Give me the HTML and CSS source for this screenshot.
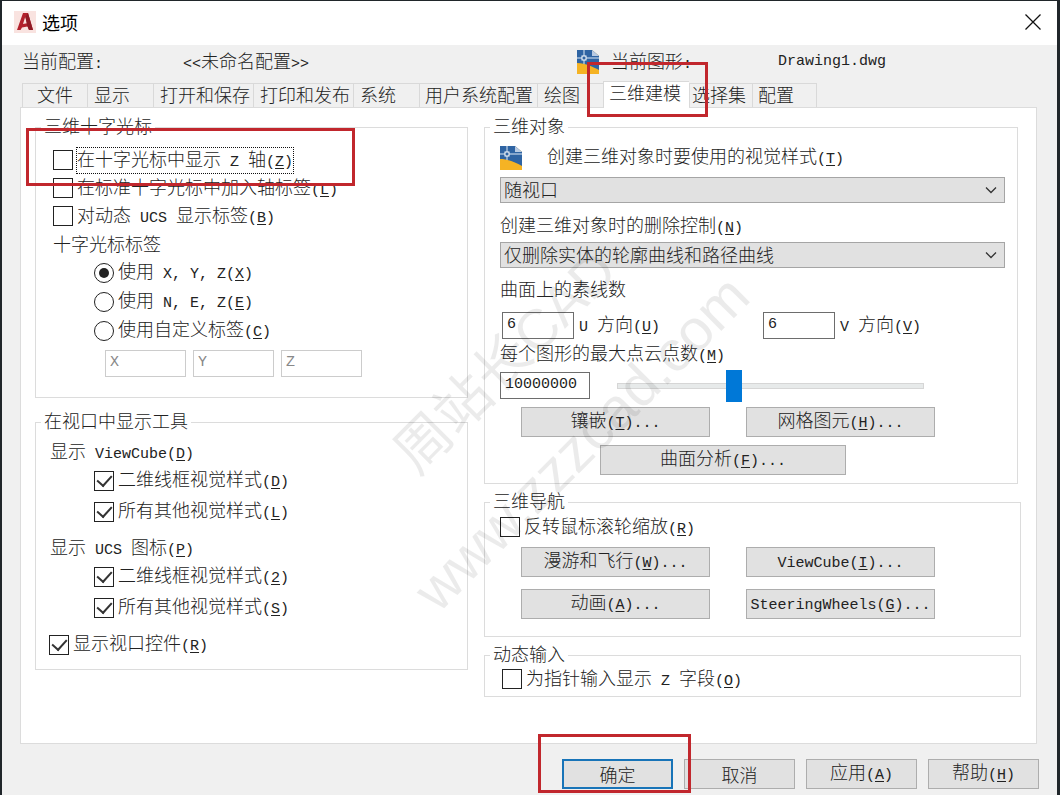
FILE: index.html
```html
<!DOCTYPE html>
<html lang="zh-CN">
<head>
<meta charset="utf-8">
<meta name="viewport" content="width=device-width, initial-scale=1">
<title>选项</title>
<link rel="stylesheet" href="styles.css">
</head>
<body>
<svg width="0" height="0" class="sprite" aria-hidden="true">
  <symbol id="dwg" viewBox="0 0 22 24">
    <path d="M0 0H15L22 6V24H0Z" fill="#f5b324"/>
    <path d="M0 0H15L22 6V20C16 17 9 13 0 13Z" fill="#2f64a3"/>
    <path d="M15 0L22 6H15Z" fill="#b9cbe3"/>
    <path d="M7 0V6M7 10V14M0 8H5M9 8H22" stroke="#dfeaf6" stroke-width="1" fill="none"/>
    <rect x="5" y="6" width="4" height="4" fill="#2f64a3" stroke="#fff" stroke-width="1"/>
  </symbol>
  <symbol id="chevron" viewBox="0 0 12 8">
    <path d="M1 1.500L6 6.500L11 1.500" fill="none" stroke="#333" stroke-width="1.300"/>
  </symbol>
</svg>
<div class="stage">
  <main class="dialog">
    <header class="titlebar">
      <svg class="app-icon" viewBox="0 0 22 22" aria-hidden="true">
        <rect width="22" height="22" fill="#f9e3e0"/>
        <path d="M3 19L9 2H14L19 19H15L13.500 15.500L8 16.500L6.500 19Z" fill="#b3212c"/>
        <path d="M11.200 6L9 13L13 12.200Z" fill="#f9e3e0"/>
        <path d="M14 2L19 19H15L13 14L11.500 6Z" fill="#8f1a25"/>
      </svg>
      <h1 class="title">选项</h1>
      <button class="close" type="button" aria-label="关闭">
        <svg viewBox="0 0 16 16" aria-hidden="true"><path d="M.5.5L15.500 15.500M15.500.5L.5 15.500" stroke="#111" stroke-width="1.300"/></svg>
      </button>
    </header>
    <div class="profile">
      <span>当前配置<span class="m">:</span></span>
      <span><span class="m">&lt;&lt;</span>未命名配置<span class="m">&gt;&gt;</span></span>
      <svg class="dwg" aria-hidden="true"><use href="#dwg"/></svg>
      <span>当前图形<span class="m">:</span></span>
      <span class="m">Drawing1.dwg</span>
    </div>
    <div class="tabs" role="tablist">
      <button class="tab tab-first" role="tab" type="button">文件</button>
      <button class="tab" role="tab" type="button">显示</button>
      <button class="tab tab-mid" role="tab" type="button">打开和保存</button>
      <button class="tab tab-mid" role="tab" type="button">打印和发布</button>
      <button class="tab" role="tab" type="button">系统</button>
      <button class="tab tab-wide" role="tab" type="button">用户系统配置</button>
      <button class="tab" role="tab" type="button">绘图</button>
      <button class="tab tab-active" role="tab" type="button" aria-selected="true">三维建模</button>
      <button class="tab tab-tight" role="tab" type="button">选择集</button>
      <button class="tab tab-last" role="tab" type="button">配置</button>
    </div>
    <div class="panel" role="tabpanel">
      <div class="column">
        <fieldset class="group crosshair">
          <legend>三维十字光标</legend>
          <label class="option"><input type="checkbox"><span class="focused">在十字光标中显示<span class="m"> Z </span>轴<span class="m">(<u>Z</u>)</span></span></label>
          <label class="option"><input type="checkbox"><span>在标准十字光标中加入轴标签<span class="m">(<u>L</u>)</span></span></label>
          <label class="option"><input type="checkbox"><span>对动态<span class="m"> UCS </span>显示标签<span class="m">(<u>B</u>)</span></span></label>
          <p class="caption">十字光标标签</p>
          <div class="radios">
            <label class="option"><input type="radio" name="axis" checked><span>使用<span class="m"> X, Y, Z(<u>X</u>)</span></span></label>
            <label class="option"><input type="radio" name="axis"><span>使用<span class="m"> N, E, Z(<u>E</u>)</span></span></label>
            <label class="option"><input type="radio" name="axis"><span>使用自定义标签<span class="m">(<u>C</u>)</span></span></label>
            <div class="axis-names">
              <input class="field" type="text" value="X" aria-label="X 轴标签" disabled>
              <input class="field" type="text" value="Y" aria-label="Y 轴标签" disabled>
              <input class="field" type="text" value="Z" aria-label="Z 轴标签" disabled>
            </div>
          </div>
        </fieldset>
        <fieldset class="group tools">
          <legend>在视口中显示工具</legend>
          <p class="caption">显示<span class="m"> ViewCube(<u>D</u>)</span></p>
          <div class="checks">
            <label class="option"><input type="checkbox" checked><span>二维线框视觉样式<span class="m">(<u>D</u>)</span></span></label>
            <label class="option"><input type="checkbox" checked><span>所有其他视觉样式<span class="m">(<u>L</u>)</span></span></label>
          </div>
          <p class="caption">显示<span class="m"> UCS </span>图标<span class="m">(<u>P</u>)</span></p>
          <div class="checks">
            <label class="option"><input type="checkbox" checked><span>二维线框视觉样式<span class="m">(<u>2</u>)</span></span></label>
            <label class="option"><input type="checkbox" checked><span>所有其他视觉样式<span class="m">(<u>S</u>)</span></span></label>
          </div>
          <label class="option"><input type="checkbox" checked><span>显示视口控件<span class="m">(<u>R</u>)</span></span></label>
        </fieldset>
      </div>
      <div class="column column-right">
        <fieldset class="group objects">
          <legend>三维对象</legend>
          <div class="style-head">
            <svg class="dwg" aria-hidden="true"><use href="#dwg"/></svg>
            <label for="visual">创建三维对象时要使用的视觉样式<span class="m">(<u>T</u>)</span></label>
          </div>
          <div class="combo"><select id="visual"><option>随视口</option></select><svg aria-hidden="true"><use href="#chevron"/></svg></div>
          <label class="line" for="deletion">创建三维对象时的删除控制<span class="m">(<u>N</u>)</span></label>
          <div class="combo"><select id="deletion"><option>仅删除实体的轮廓曲线和路径曲线</option></select><svg aria-hidden="true"><use href="#chevron"/></svg></div>
          <p class="line line-tall">曲面上的素线数</p>
          <div class="isolines">
            <div class="iso"><input class="field" id="iso-u" type="text" value="6"><label for="iso-u"><span class="m">U </span>方向<span class="m">(<u>U</u>)</span></label></div>
            <div class="iso"><input class="field" id="iso-v" type="text" value="6"><label for="iso-v"><span class="m">V </span>方向<span class="m">(<u>V</u>)</span></label></div>
          </div>
          <label class="line line-short" for="points">每个图形的最大点云点数<span class="m">(<u>M</u>)</span></label>
          <div class="points">
            <input class="field" id="points" type="text" value="10000000">
            <input class="slider" type="range" min="0" max="1000" value="375" aria-label="最大点云点数">
          </div>
          <div class="buttons">
            <button class="btn" type="button">镶嵌<span class="m">(<u>T</u>)...</span></button>
            <button class="btn" type="button">网格图元<span class="m">(<u>H</u>)...</span></button>
            <button class="btn btn-wide" type="button">曲面分析<span class="m">(<u>F</u>)...</span></button>
          </div>
        </fieldset>
        <fieldset class="group navigation">
          <legend>三维导航</legend>
          <label class="option"><input type="checkbox"><span>反转鼠标滚轮缩放<span class="m">(<u>R</u>)</span></span></label>
          <div class="buttons buttons-loose">
            <button class="btn" type="button">漫游和飞行<span class="m">(<u>W</u>)...</span></button>
            <button class="btn" type="button"><span class="m">ViewCube(<u>I</u>)...</span></button>
            <button class="btn" type="button">动画<span class="m">(<u>A</u>)...</span></button>
            <button class="btn" type="button"><span class="m">SteeringWheels(<u>G</u>)...</span></button>
          </div>
        </fieldset>
        <fieldset class="group dynamic">
          <legend>动态输入</legend>
          <label class="option"><input type="checkbox"><span>为指针输入显示<span class="m"> Z </span>字段<span class="m">(<u>O</u>)</span></span></label>
        </fieldset>
      </div>
    </div>
    <footer class="actions">
      <button class="btn btn-default" type="button">确定</button>
      <button class="btn" type="button">取消</button>
      <button class="btn" type="button">应用<span class="m">(<u>A</u>)</span></button>
      <button class="btn" type="button">帮助<span class="m">(<u>H</u>)</span></button>
    </footer>
  </main>
  <div class="watermark watermark-name">周站长CAD</div>
  <div class="watermark watermark-site">www.zzzcad.com</div>
  <div class="mark mark-option"></div>
  <div class="mark mark-tab"></div>
  <div class="mark mark-ok"></div>
</div>
</body>
</html>
```
FILE: styles.css
```css
* { box-sizing: border-box; }

body {
  margin: 0;
  background: #20262a;
  color: #222;
  font: 300 18px/20px "Noto Sans CJK SC", sans-serif;
}

h1, p { margin: 0; font: inherit; }
button, input, select { font: inherit; color: inherit; margin: 0; }
.sprite { position: absolute; }

/* Half-width characters: one half of a CJK character wide */
.m, .field {
  font-family: "Liberation Mono", "Noto Sans CJK SC", monospace;
  font-size: 15px;
  font-weight: 400;
  white-space: pre;
}
.m u { text-underline-offset: 2px; }

.stage { position: relative; min-width: 1040px; overflow: hidden; }

.dialog {
  min-height: 100vh;
  border: solid #20262a;
  border-width: 1px 3px 0 2px;
  background: #f0f0f0;
  display: flex;
  flex-direction: column;
}

.titlebar {
  display: flex;
  align-items: center;
  gap: 6px;
  height: 44px;
  padding: 0 16px 2px 12px;
  background: #fff;
  color: #000;
}
.app-icon { width: 22px; height: 22px; }
.title { flex: 1; font-weight: 400; }
.close { border: 0; padding: 0; background: none; display: flex; }
.close svg { width: 16px; height: 16px; }

.profile {
  display: grid;
  grid-template-columns: 161px 394px 34px 167px 1fr;
  align-items: center;
  height: 36px;
  padding: 0 0 2px 20px;
}
.dwg { width: 22px; height: 24px; }

.tabs {
  display: flex;
  align-items: flex-end;
  height: 28px;
  margin-top: -2px;
  padding-left: 20px;
}
.tab {
  width: 66px;
  height: 24px;
  padding: 0 0 4px 6px;
  border: 1px solid #d9d9d9;
  border-width: 1px 0 0 1px;
  background: #f0f0f0;
  text-align: left;
  white-space: nowrap;
}
.tab-first { width: 65px; padding-left: 14px; }
.tab-mid { width: 100px; }
.tab-wide { width: 118px; padding-left: 5px; }
.tab-active {
  width: 86px;
  height: 27px;
  margin-bottom: -1px;
  padding: 0 0 6px 5px;
  background: #fff;
  z-index: 1;
}
.tab-tight { width: 63px; padding-left: 2px; }
.tab-last { width: 65px; padding-left: 5px; border-right-width: 1px; }

.panel {
  flex: 1;
  display: grid;
  grid-template-columns: 433fr 537fr;
  gap: 16px;
  margin: 0 20px 0 18px;
  padding: 10px 15px 45px 14px;
  border: 1px solid #dcdcdc;
  background: #fff;
}
.column { display: flex; flex-direction: column; gap: 15px; min-width: 0; }
.column-right { gap: 9px; }

.group {
  --inset: 15px;
  min-width: 0;
  margin: 0;
  padding: 0 var(--inset);
  border: 1px solid #dcdcdc;
}
legend {
  height: 18px;
  line-height: 15px;
  margin-left: calc(5px - var(--inset));
  padding: 0 3px;
}

.option { display: flex; align-items: center; gap: 4px; height: 28px; white-space: nowrap; }
.caption { height: 28px; line-height: 26px; }

input[type="checkbox"], input[type="radio"] {
  appearance: none;
  flex: none;
  display: grid;
  place-items: center;
  width: 20px;
  height: 20px;
  border: 1px solid #222;
  background: #fff;
}
input[type="radio"] { border-radius: 50%; }
input[type="radio"]:checked::before {
  content: "";
  width: 10px;
  height: 10px;
  border-radius: 50%;
  background: #222;
}
input[type="checkbox"]:checked::before {
  content: "";
  width: 7px;
  height: 12px;
  margin-bottom: 4px;
  border: solid #333;
  border-width: 0 2px 2px 0;
  transform: rotate(42deg);
}
.focused { outline: 1px dotted #111; }

.field {
  height: 27px;
  padding: 0 4px 2px;
  border: 1px solid #6d6d6d;
  border-radius: 0;
  background: #fff;
}
.field:disabled { border-color: #ccc; color: #888; }

.crosshair { --inset: 17px; padding-top: 10px; padding-bottom: 20px; }
.radios { padding-left: 41px; }
.radios .option { height: 29px; }
.axis-names { display: flex; gap: 7px; margin: 5px 0 0 11px; }
.axis-names .field { width: 81px; }

.tools { --inset: 13px; padding-top: 6px; padding-bottom: 9px; }
.tools .option { height: 31px; }
.tools .checks { padding: 0 0 6px 45px; }
.tools .caption { padding-left: 1px; }

.objects { margin-right: 3px; padding: 8px 12px 8px 15px; }
.style-head { display: flex; align-items: center; gap: 25px; height: 33px; padding-bottom: 6px; }
.combo { display: grid; align-items: center; }
.combo > * { grid-area: 1 / 1; }
.combo select {
  appearance: none;
  width: 100%;
  height: 26px;
  padding: 0 28px 3px 3px;
  border: 1px solid #a5a5a5;
  border-radius: 0;
  background: #e1e1e1;
}
.combo svg { justify-self: end; width: 12px; height: 8px; margin-right: 8px; pointer-events: none; }
.line { display: block; height: 39px; line-height: 42px; }
.line-tall { height: 44px; line-height: 40px; }
.line-short { height: 33px; line-height: 27px; }

.isolines { display: grid; grid-template-columns: 261px 1fr; padding-left: 2px; }
.iso { display: flex; align-items: center; gap: 5px; }
.iso .field { width: 72px; }
.points { display: flex; align-items: center; gap: 27px; padding-right: 81px; }
.points .field { width: 90px; }

.slider {
  appearance: none;
  flex: 1;
  min-width: 0;
  height: 6px;
  border: 1px solid #d6d6d6;
  background: #e7eaea;
}
.slider::-webkit-slider-thumb {
  appearance: none;
  width: 16px;
  height: 32px;
  background: #0078d7;
}

.buttons {
  display: grid;
  grid-template-columns: 189px 189px;
  gap: 8px 36px;
  padding: 8px 0 0 21px;
}
.buttons-loose { gap: 12px 36px; padding-top: 6px; }
.btn {
  height: 30px;
  padding: 0 0 1px;
  border: 1px solid #adadad;
  background: #e1e1e1;
  white-space: nowrap;
}
.btn-wide { grid-column: 1 / 3; width: 246px; margin-left: 79px; }

.navigation { padding-top: 2px; padding-bottom: 17px; }
.dynamic { --inset: 17px; padding-top: 1px; padding-bottom: 3px; }

.actions {
  display: flex;
  justify-content: flex-end;
  gap: 11px;
  padding: 15px 18px 6px;
}
.actions .btn { width: 111px; }
.actions .btn-default { border: 2px solid #1874b8; }

.watermark {
  position: absolute;
  transform: rotate(-45deg);
  transform-origin: 0 50%;
  color: rgba(0, 0, 0, .08);
  white-space: nowrap;
  pointer-events: none;
}
.watermark-name {
  left: 404px;
  top: 433px;
  font: 400 56px/60px "Liberation Sans", "Noto Sans CJK SC", sans-serif;
}
.watermark-site {
  left: 424px;
  top: 570px;
  font: 400 58px/60px "Liberation Sans", sans-serif;
}

/* Callout frames laid over the dialog */
.mark { position: absolute; border: 3px solid #c1272d; pointer-events: none; }
.mark-option { left: 26px; top: 128px; width: 329px; height: 58px; }
.mark-tab { left: 587px; top: 62px; width: 121px; height: 55px; }
.mark-ok { left: 538px; top: 734px; width: 153px; height: 59px; }
```
